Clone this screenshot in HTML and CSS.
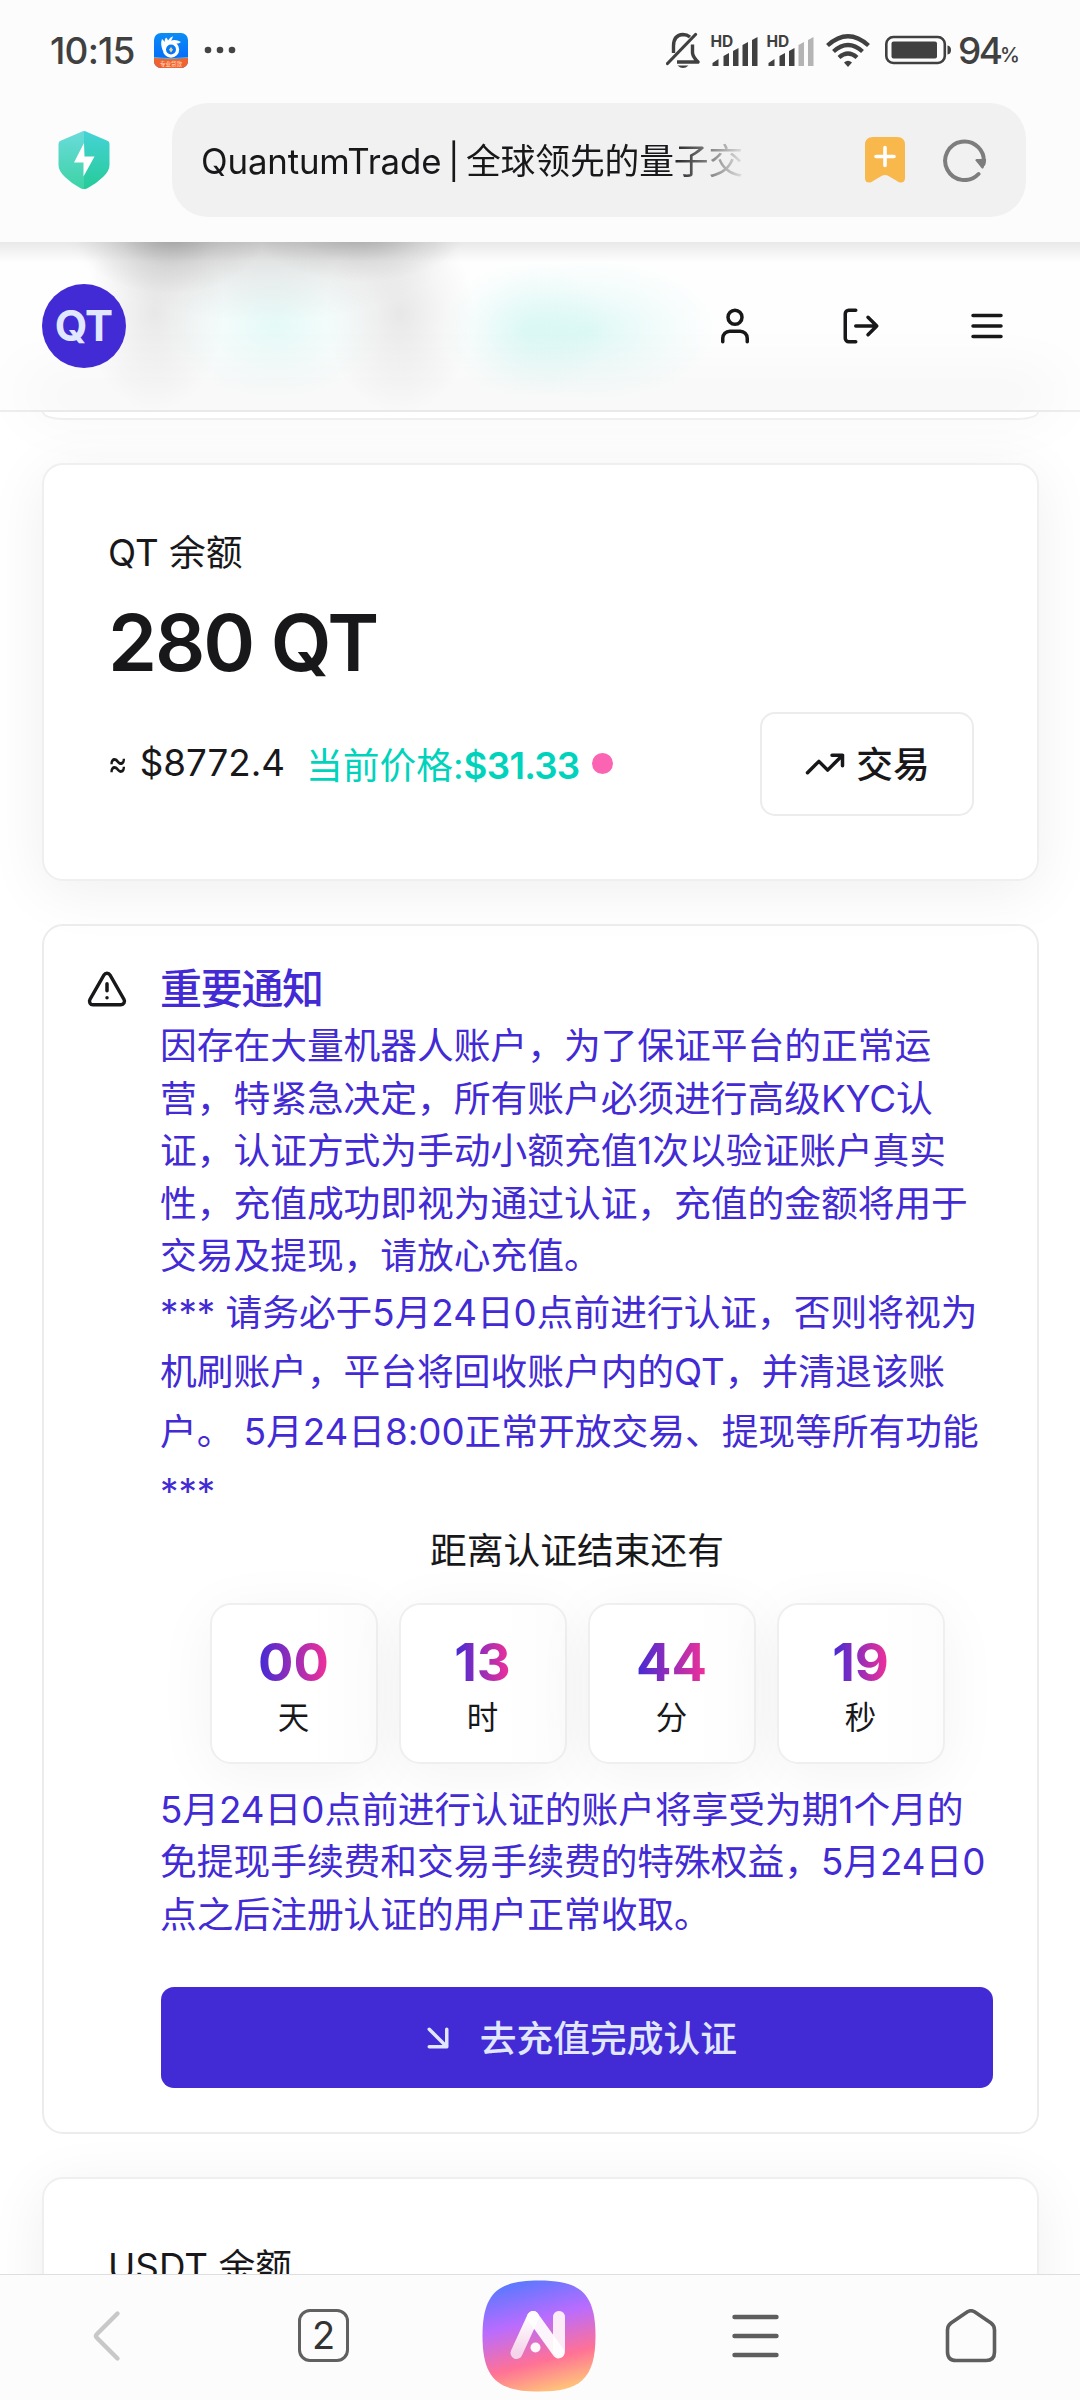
FILE: index.html
```html
<!DOCTYPE html>
<html lang="zh-CN">
<head>
<meta charset="utf-8">
<title>QuantumTrade</title>
<link rel="stylesheet" href="styles.css">
</head>
<body>
<div class="status">
  <span class="time">10:15</span>
  <svg class="app" viewBox="0 0 34 35" width="34" height="35">
    <defs>
      <clipPath id="appClip"><rect width="34" height="35" rx="7"/></clipPath>
      <linearGradient id="appBlue" x1="0" y1="0" x2="0" y2="1"><stop offset="0" stop-color="#0a8df5"/><stop offset="1" stop-color="#0560fb"/></linearGradient>
    </defs>
    <g clip-path="url(#appClip)">
      <rect width="34" height="35" fill="url(#appBlue)"/>
      <path d="M0 24.500Q17 27 34 24.500V35H0z" fill="#f2622f"/>
      <path d="M0 24.500Q17 27 34 24.500" fill="none" stroke="#5cb6cf" stroke-width="1"/>
      <circle cx="17" cy="16.500" r="6.600" fill="none" stroke="#fff" stroke-width="3.200"/>
      <path d="M9 18Q6 11 8 6q1.500 1 2.500 3Q10.500 6 12 4.500q1.500 1 2 3Q16 4 19 3.200q-.5 2.500-2 4.300 5-1.500 10 1.500-1.500 1.500-5 1.800Q13 9.500 12 15z" fill="#fff"/>
      <path d="M17 14l2 2.700-2 2.700-2-2.700z" fill="#e8d98c"/>
      <text x="17" y="33" class="app-text">专业贷款</text>
    </g>
  </svg>
  <svg class="dots" viewBox="0 0 32 8" width="32" height="8" fill="#444"><circle cx="4" cy="4" r="3.300"/><circle cx="16" cy="4" r="3.300"/><circle cx="28" cy="4" r="3.300"/></svg>
  <div class="status-right">
    <svg class="bell" viewBox="0 0 34 38" width="34" height="38" fill="none" stroke="#404040" stroke-width="3.400" stroke-linejoin="round">
      <path d="M7.500 22V15Q7.500 4 17 3.500 21 3.500 24 6"/>
      <path d="M26.500 13.500V22Q27 26 32 31H11"/>
      <path d="M1.500 32.500L29.500 3.500" stroke-linecap="round" stroke-width="3.200"/>
      <path d="M11.500 34.500H22.500Q17 39.500 11.500 34.500z" fill="#404040" stroke="none"/>
    </svg>
    <svg class="sig" viewBox="0 0 48 34" width="48" height="34" fill="#404040">
      <text x="-.5" y="13.500" class="hd">HD</text>
      <path d="M1.500 33v-3l6-4v7zM12.500 33V23l5.500-3v13zM22 33V18l5.500-3v18zM31.500 33V12l5.500-3v24zM41 33V7l5.500-3v29z"/>
    </svg>
    <svg class="sig2" viewBox="0 0 48 34" width="48" height="34" fill="#404040">
      <text x="-.5" y="13.500" class="hd">HD</text>
      <path d="M1.500 33v-3l6-4v7zM12.500 33V23l5.500-3v13zM22 33V18l5.500-3v18z"/>
      <path fill="#b4b4b4" d="M31.500 33V12l5.500-3v24zM41 33V7l5.500-3v29z"/>
    </svg>
    <svg class="wifi" viewBox="0 0 44 33" width="44" height="33" fill="none" stroke="#404040" stroke-width="4.300">
      <path d="M1.500 11.500Q22-7 42.500 11.500M7.500 17.500Q22 4.500 36.500 17.500M13 23.500Q22 15.500 31 23.500"/>
      <path d="M22 33l-4-4.500q4-3.500 8 0z" fill="#404040" stroke="none"/>
    </svg>
    <svg class="batt" viewBox="0 0 67 30" width="67" height="30" fill="#404040">
      <rect x="1.300" y="2" width="58.500" height="26" rx="7" fill="none" stroke="#404040" stroke-width="2.600"/>
      <rect x="6.500" y="6.500" width="45.500" height="17" rx="2"/>
      <path d="M62.500 10.500q3.500.5 3.500 4.500t-3.500 4.500z"/>
    </svg>
    <span class="pct">94</span><span class="pct-s">%</span>
  </div>
</div>

<div class="urlrow">
  <svg class="shield" viewBox="0 0 52 58" width="52" height="58">
    <defs>
      <linearGradient id="shL" x1="0" y1="0" x2="0" y2="1"><stop offset="0" stop-color="#6adbdb"/><stop offset="1" stop-color="#3dd3a5"/></linearGradient>
      <linearGradient id="shR" x1="0" y1="0" x2="0" y2="1"><stop offset="0" stop-color="#45d3d6"/><stop offset="1" stop-color="#26cb98"/></linearGradient>
    </defs>
    <path d="M26 0Q24.500 0 23 1L2 10Q.5 11 .5 13V34Q.5 40 7 46 14 53 23 57.500 25 58.300 26 58z" fill="url(#shL)"/>
    <path d="M26 0Q27.500 0 29 1L50 10Q51.500 11 51.500 13V34Q51.500 40 45 46 38 53 29 57.500 27 58.300 26 58z" fill="url(#shR)"/>
    <path d="M26 12L16 31.500h9.500V45.500L36.500 25.500H26.500z" fill="#fff"/>
  </svg>
  <div class="urlbar">
    <span class="url-text">QuantumTrade <i>|</i> 全球领先的量子交</span>
    <svg class="bookmark" viewBox="0 0 40 46" width="40" height="46">
      <path d="M8 0H32Q40 0 40 8V41Q40 46 35 45.500 33.500 45 32 44L23.500 39Q20 37.200 16.500 39L8 44Q6.500 45 5 45.500 0 46 0 41V8Q0 0 8 0z" fill="#f9b84c"/>
      <path d="M20 10.500V28.500M11 19.500H29" stroke="#fff" stroke-width="3.600" stroke-linecap="round"/>
    </svg>
    <svg class="reload" viewBox="0 0 44 44" width="44" height="44">
      <path d="M35.500 36A19.300 19.300 0 1 1 40.500 26" fill="none" stroke="#7d7d7d" stroke-width="4" stroke-linecap="round"/>
      <path d="M33.500 21H42.500Q43.500 21 43 23L40.500 30Q39.500 31 38.500 30L32.500 22.500Q32.300 21 33.500 21z" fill="#7d7d7d"/>
    </svg>
  </div>
</div>

<div class="page">
  <header class="header">
    <div class="logo">QT</div>
    <div class="tools">
      <svg class="lu" viewBox="0 0 24 24"><path d="M19 21v-2a4 4 0 0 0-4-4H9a4 4 0 0 0-4 4v2"/><circle cx="12" cy="7" r="4"/></svg>
      <svg class="lu" viewBox="0 0 24 24"><path d="M9 21H5a2 2 0 0 1-2-2V5a2 2 0 0 1 2-2h4M16 17l5-5-5-5M21 12H9"/></svg>
      <svg class="lu" viewBox="0 0 24 24"><path d="M4 6h16M4 12h16M4 18h16"/></svg>
    </div>
  </header>
  <main class="content">
    <div class="card stub"></div>
    <section class="card balance">
      <div class="label">QT 余额</div>
      <div class="amount">280 QT</div>
      <div class="row">
        <span class="approx"><i>≈</i> $8772.4</span>
        <span class="price">当前价格:<b>$31.33</b></span>
        <span class="pulse"></span>
        <button class="trade"><svg class="lu" viewBox="0 0 24 24"><path d="M22 7l-8.500 8.500-5-5L2 17M16 7h6v6"/></svg><span>交易</span></button>
      </div>
    </section>
    <section class="notice">
      <svg class="lu" viewBox="0 0 24 24"><path d="m21.730 18-8-14a2 2 0 0 0-3.480 0l-8 14A2 2 0 0 0 4 21h16a2 2 0 0 0 1.730-3M12 9v4M12 17h.01"/></svg>
      <div class="notice-body">
        <h5>重要通知</h5>
        <p class="p1">因存在大量机器人账户，为了保证平台的正常运<br>营，特紧急决定，所有账户必须进行高级KYC认<br>证，认证方式为手动小额充值1次以验证账户真实<br>性，充值成功即视为通过认证，充值的金额将用于<br>交易及提现，请放心充值。</p>
        <p class="p2">*** 请务必于5月24日0点前进行认证，否则将视为<br>机刷账户，平台将回收账户内的QT，并清退该账<br>户。 5月24日8:00正常开放交易、提现等所有功能<br>***</p>
        <div class="cd-title">距离认证结束还有</div>
        <div class="cd">
          <div class="unit"><strong>00</strong><span>天</span></div>
          <div class="unit"><strong>13</strong><span>时</span></div>
          <div class="unit"><strong>44</strong><span>分</span></div>
          <div class="unit"><strong>19</strong><span>秒</span></div>
        </div>
        <p class="p3">5月24日0点前进行认证的账户将享受为期1个月的<br>免提现手续费和交易手续费的特殊权益，5月24日0<br>点之后注册认证的用户正常收取。</p>
        <button class="go"><svg class="lu" viewBox="0 0 24 24"><path d="m7 7 10 10M17 7v10H7"/></svg><span>去充值完成认证</span></button>
      </div>
    </section>
    <section class="card usdt"><div class="label">USDT 余额</div></section>
  </main>
</div>

<nav class="nav">
  <div><svg viewBox="0 0 54 54" width="54" height="54" fill="none" stroke="#c8c8c8" stroke-width="4.400" stroke-linecap="round" stroke-linejoin="round"><path d="M36.500 4.500L16 25Q14 27 16 29L36.500 49.500"/></svg></div>
  <div><span class="tabs">2</span></div>
  <div>
    <svg viewBox="0 0 114 112" width="114" height="112">
      <defs>
        <linearGradient id="ai" x1=".35" y1="0" x2=".62" y2="1"><stop offset="0" stop-color="#5b78ff"/><stop offset=".36" stop-color="#b96cff"/><stop offset=".72" stop-color="#ff7196"/><stop offset="1" stop-color="#ffc37a"/></linearGradient>
        <linearGradient id="leg" x1="0" y1="0" x2="0" y2="1"><stop offset="0" stop-color="#fff"/><stop offset="1" stop-color="#f5d3ea"/></linearGradient>
      </defs>
      <path d="M57 .5C97 .5 113.500 12 113.500 56S97 111.500 57 111.500.5 100 .5 56 17 .5 57 .5z" fill="url(#ai)"/>
      <path d="M77 37V70" stroke="#f6d8ee" stroke-width="12" stroke-linecap="round"/>
      <path d="M51 37L34.500 73" stroke="url(#leg)" stroke-width="12" stroke-linecap="round"/>
      <path d="M51 37L76.500 72.500" stroke="#fff" stroke-opacity=".93" stroke-width="12" stroke-linecap="round"/>
      <path d="M77 37V72" stroke="#fff" stroke-opacity=".5" stroke-width="12" stroke-linecap="round"/>
      <circle cx="53.500" cy="67.500" r="5" fill="#fff" fill-opacity=".95"/>
    </svg>
  </div>
  <div><svg viewBox="0 0 54 54" width="54" height="54" stroke="#5e5e5e" stroke-width="4.400" stroke-linecap="round"><path d="M6.500 8H48.500M6.500 27H48.500M6.500 46H48.500"/></svg></div>
  <div><svg viewBox="0 0 54 54" width="54" height="54" fill="none" stroke="#5e5e5e" stroke-width="3.600" stroke-linejoin="round"><path d="M23.500 2.800Q27 .7 30.500 2.800L47 14Q50.500 16.500 50.500 21V43Q50.500 51.500 42 51.500H12Q3.500 51.500 3.500 43V21Q3.500 16.500 7 14z"/></svg></div>
</nav>
</body>
</html>
```
FILE: styles.css
```css
* { box-sizing: border-box; margin: 0; padding: 0; }

body {
  width: 1080px;
  height: 2400px;
  overflow: hidden;
  display: flex;
  flex-direction: column;
  background: #fcfcfc;
  color: #18181b;
  font-family: Inter, "Noto Sans CJK SC", sans-serif;
  font-size: 36.75px;
  white-space: nowrap;
}

svg { display: block; flex: none; }
button { font: inherit; color: inherit; background: none; border: 0; }
i { font-style: normal; }

.lu {
  width: 42px;
  height: 42px;
  fill: none;
  stroke: currentColor;
  stroke-width: 2;
  stroke-linecap: round;
  stroke-linejoin: round;
}

/* status bar */
.status {
  height: 100px;
  display: flex;
  align-items: center;
  padding: 0 61px 0 50px;
  color: #404040;
}
.time { font-size: 37px; width: 104px; font-weight: 500; letter-spacing: -0.8px; }
.app-text { font-size: 5.5px; fill: #ffe3d0; text-anchor: middle; }
.dots { margin-left: 16px; }
.status-right { display: flex; align-items: center; margin-left: auto; }
.sig { margin-left: 11px; }
.sig2 { margin-left: 8px; }
.hd { font-size: 15.5px; font-weight: 700; }
.wifi { margin-left: 11px; }
.batt { margin-left: 15px; }
.pct { font-size: 37px; font-weight: 500; letter-spacing: -2.5px; width: 42px; margin-left: 6px; }
.pct-s { font-size: 20px; font-weight: 500; margin-top: 10px; width: 19px; letter-spacing: -1px; }

/* address row */
.urlrow {
  height: 142px;
  display: flex;
  align-items: flex-start;
  padding: 3px 54px 0 58px;
}
.shield { margin-top: 28px; }
.urlbar {
  flex: 1;
  height: 114px;
  margin-left: 62px;
  padding: 0 39px 0 29px;
  display: flex;
  align-items: center;
  background: #f1f1f1;
  border-radius: 36px;
}
.url-text {
  width: 560px;
  font-size: 34.8px;
  letter-spacing: -0.15px;
  padding-bottom: 3px;
  -webkit-mask-image: linear-gradient(90deg, #000 470px, transparent 548px);
  mask-image: linear-gradient(90deg, #000 470px, transparent 548px);
}
.url-text i { margin: 0 -3px; }
.bookmark { margin-left: auto; }
.reload { margin-left: 38px; }

/* web page */
.page { flex: 1; background: #fff; overflow: hidden; }
.header {
  height: 170px;
  display: flex;
  align-items: center;
  justify-content: space-between;
  padding: 0 72px 0 42px;
  border-bottom: 2px solid #eeeeef;
  background:
    linear-gradient(180deg, rgba(0, 0, 0, .085), transparent 20px),
    radial-gradient(95px 60px at 170px -8px, rgba(90, 90, 90, .4), rgba(90, 90, 90, .12) 55%, transparent),
    radial-gradient(105px 50px at 360px -10px, rgba(90, 90, 90, .36), rgba(90, 90, 90, .1) 60%, transparent),
    radial-gradient(200px 90px at 265px -10px, rgba(90, 90, 90, .26), rgba(90, 90, 90, .1) 50%, transparent),
    radial-gradient(110px 75px at 275px 84px, rgba(0, 211, 187, .1), rgba(0, 211, 187, .03) 60%, transparent),
    radial-gradient(85px 70px at 525px 88px, rgba(0, 211, 187, .09), rgba(0, 211, 187, .03) 60%, transparent),
    radial-gradient(130px 72px at 590px 88px, rgba(0, 211, 187, .12), rgba(0, 211, 187, .04) 60%, transparent),
    radial-gradient(70px 100px at 155px 70px, rgba(0, 0, 0, .09), rgba(0, 0, 0, .03) 60%, transparent),
    radial-gradient(75px 100px at 400px 72px, rgba(0, 0, 0, .09), rgba(0, 0, 0, .03) 60%, transparent),
    #fefefe;
}
.logo {
  width: 84px;
  height: 84px;
  border-radius: 50%;
  background: #422ad5;
  color: #e0e7ff;
  font-size: 42px;
  font-weight: 700;
  line-height: 84px;
  text-align: center;
  letter-spacing: -1px;
  text-indent: -1px;
}
.tools { display: flex; gap: 84px; }

.content { padding: 0 41px 0 42px; }
.card {
  border: 2px solid #efefef;
  border-radius: 21px;
  background: #fff;
  box-shadow: 0 10px 60px rgba(0, 0, 0, .065);
}
.stub {
  height: 8px;
  border-top: 0;
  border-radius: 0 0 21px 21px / 0 0 8px 8px;
  box-shadow: 0 -20px 60px 20px rgba(0, 0, 0, .04);
}
.balance {
  height: 418px;
  margin-top: 43px;
  padding: 62px 64px;
}
.label { line-height: 52px; }
.amount {
  margin-top: 11px;
  font-size: 78.75px;
  font-weight: 600;
  line-height: 105px;
  letter-spacing: -2.1px;
}
.row { display: flex; align-items: center; margin-top: 17px; height: 104px; }
.approx { width: 198px; padding-bottom: 3px; }
.approx i { display: inline-block; transform: scaleX(.8); transform-origin: left; margin-right: -3px; }
.price { color: #00d3bb; width: 275px; padding-bottom: 3px; }
.price b { font-weight: 600; letter-spacing: -.75px; }
.pulse {
  width: 21px;
  height: 21px;
  margin-left: 11px;
  margin-bottom: 2px;
  border-radius: 50%;
  background: #fb63b3;
}
.trade {
  width: 214px;
  height: 104px;
  margin-left: auto;
  margin-right: -1px;
  display: flex;
  align-items: center;
  justify-content: center;
  gap: 10px;
  font-weight: 500;
  border: 2px solid #ececec;
  border-radius: 15px;
}
.trade span, .go span { padding-bottom: 4px; }

.notice {
  height: 1210px;
  margin-top: 43px;
  padding: 42px 44px 42px 42px;
  display: flex;
  border: 2px solid #ececec;
  border-radius: 21px;
}
.notice-body { flex: 1; margin-left: 33px; color: #422ad5; }
.notice h5 { font-size: 42px; font-weight: 500; line-height: 42px; letter-spacing: -1.3px; text-indent: -1px; }
.notice p { margin-left: -1px; letter-spacing: -.03px; }
.p1 { margin-top: 10px; line-height: 52.5px; }
.p2 { line-height: 59.8px; }
.notice .p3 { margin-top: 20px; line-height: 52.5px; }
.cd-title { margin-top: 3px; line-height: 52px; text-align: center; color: #18181b; }
.cd { display: flex; justify-content: center; gap: 21px; margin-top: 26px; }
.unit {
  width: 168px;
  height: 161px;
  padding-top: 29px;
  display: flex;
  flex-direction: column;
  align-items: center;
  border: 2px solid #efefef;
  border-radius: 21px;
  background: linear-gradient(90deg, #fff 60%, #fcfcfc);
  box-shadow: 0 10px 60px rgba(0, 0, 0, .05);
  color: #18181b;
}
.unit strong {
  font-size: 52.5px;
  font-weight: 700;
  line-height: 56px;
  background: linear-gradient(90deg, #422ad5, #f43098);
  -webkit-background-clip: text;
  background-clip: text;
  color: transparent;
}
.unit span { font-size: 31.5px; line-height: 42px; margin-top: 7px; }
.go {
  width: 100%;
  height: 101px;
  margin-top: 46px;
  display: flex;
  align-items: center;
  justify-content: center;
  gap: 21px;
  border-radius: 13px;
  background: #422ad5;
  color: #e0e7ff;
  font-weight: 500;
}
.usdt { height: 418px; margin-top: 43px; padding: 62px 64px; }

/* bottom bar */
.nav {
  flex: none;
  height: 126px;
  display: grid;
  grid-template-columns: repeat(5, 1fr);
  place-items: center;
  padding: 0 1px 4px 0;
  border-top: 1px solid #dedede;
  background: #fcfcfc;
}
.nav div { display: flex; }
.tabs {
  width: 51px;
  height: 53px;
  border: 3.5px solid #606060;
  border-radius: 12px;
  text-align: center;
  font-size: 38px;
  line-height: 46px;
  color: #333;
}
```
